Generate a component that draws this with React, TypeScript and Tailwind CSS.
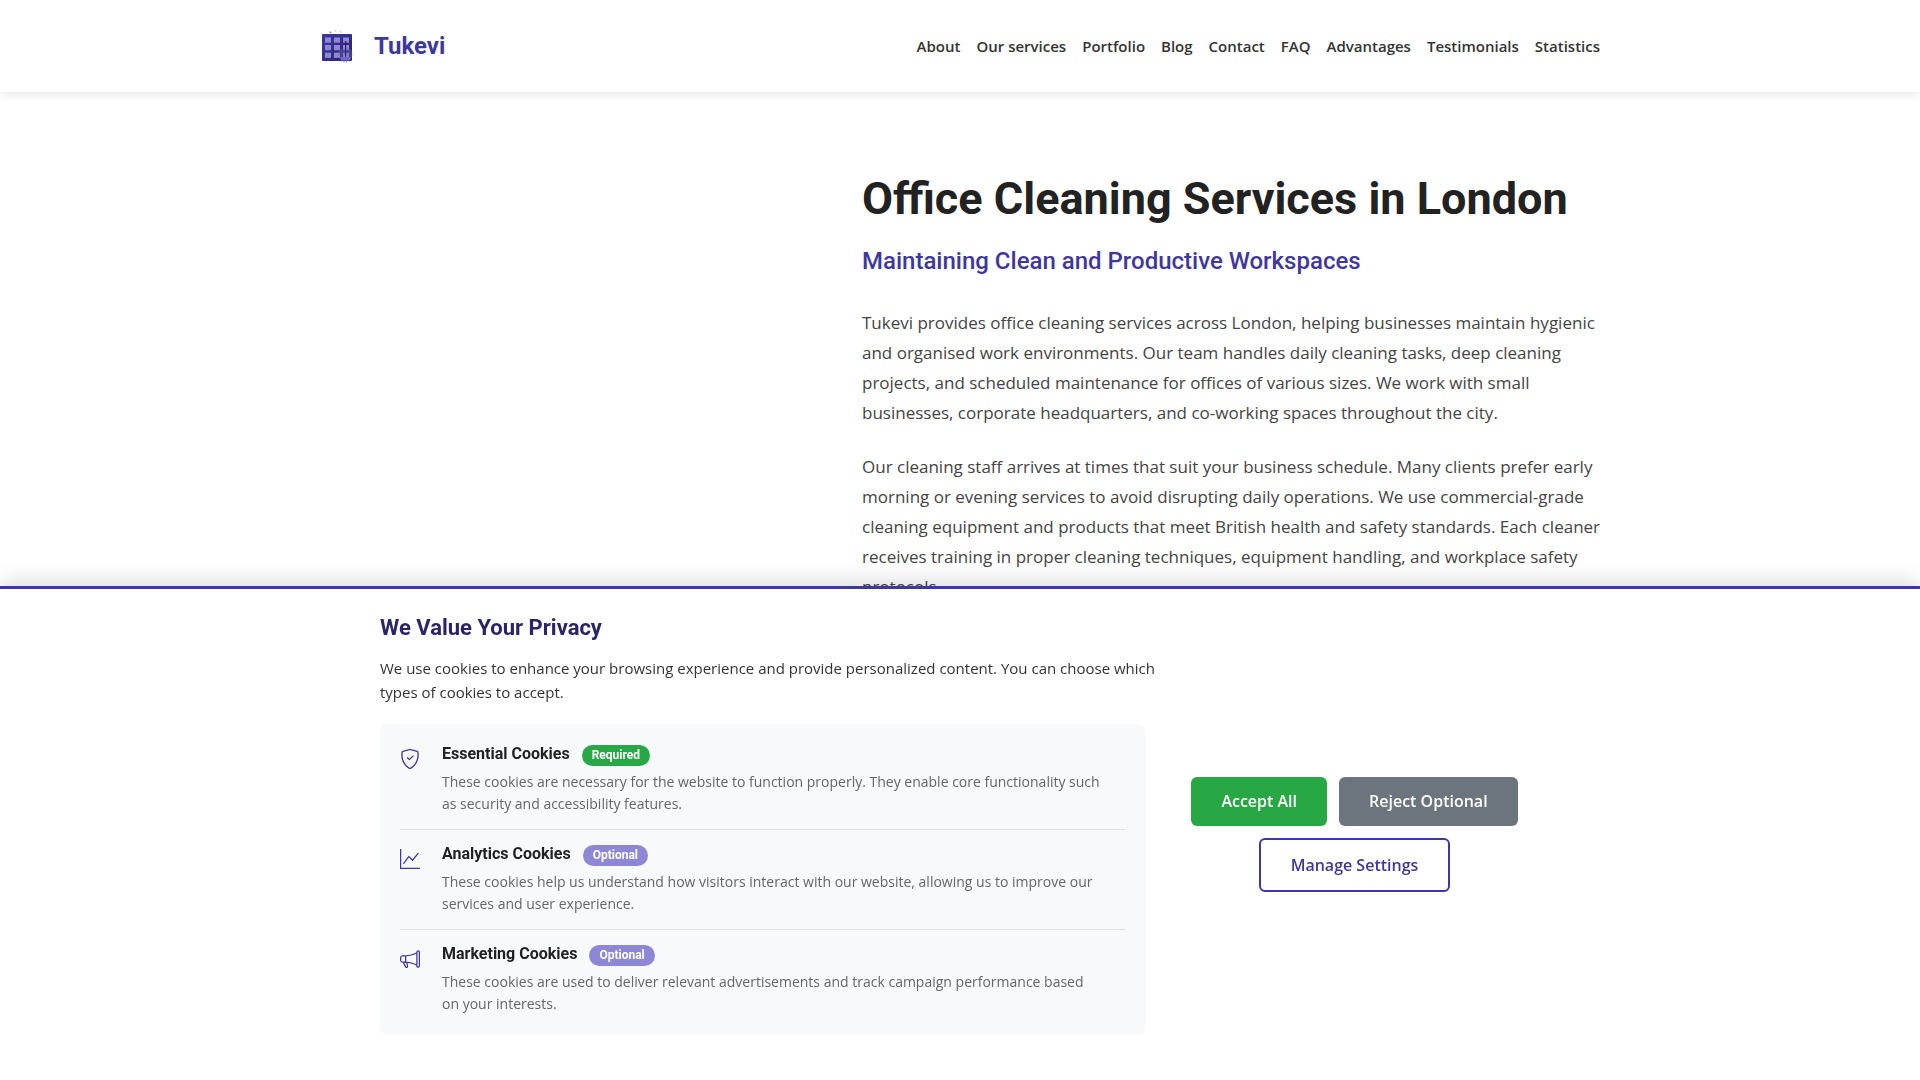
import React from "react";
import { BsShieldCheck, BsGraphUp, BsMegaphone } from "react-icons/bs";

const links = ["About", "Our services", "Portfolio", "Blog", "Contact", "FAQ", "Advantages", "Testimonials", "Statistics"];

const cookies = [
  {
    icon: BsShieldCheck,
    name: "Essential Cookies",
    badge: "Required",
    badgeClass: "bg-[#28a745]",
    text: "These cookies are necessary for the website to function properly. They enable core functionality such as security and accessibility features.",
  },
  {
    icon: BsGraphUp,
    name: "Analytics Cookies",
    badge: "Optional",
    badgeClass: "bg-[#8e87d6]",
    text: "These cookies help us understand how visitors interact with our website, allowing us to improve our services and user experience.",
  },
  {
    icon: BsMegaphone,
    name: "Marketing Cookies",
    badge: "Optional",
    badgeClass: "bg-[#8e87d6]",
    text: "These cookies are used to deliver relevant advertisements and track campaign performance based on your interests.",
  },
];

function Logo() {
  return (
    <svg viewBox="0 0 40 40" className="size-10" aria-hidden="true">
      <defs>
        <linearGradient id="wall" x1="0" y1="0" x2="1" y2="1">
          <stop offset="0" stopColor="#3f37a0" />
          <stop offset="1" stopColor="#2a2568" />
        </linearGradient>
      </defs>
      <g fill="#8e87d6">
        <circle cx="10.5" cy="6.5" r="1" />
        <circle cx="15.5" cy="5" r="0.7" opacity="0.6" />
        <circle cx="20.5" cy="5.7" r="0.7" opacity="0.7" />
        <circle cx="9.3" cy="5.7" r="0.5" opacity="0.5" />
      </g>
      <rect x="2" y="8" width="30" height="27" rx="1" fill="url(#wall)" />
      <g fill="#8e87d6">
        {[11.5, 19, 26.7].map((y) =>
          [5, 14, 23].map((x) => <rect key={`${x}-${y}`} x={x} y={y} width="6" height="5.2" />)
        )}
      </g>
      <circle cx="25.5" cy="28.5" r="7" fill="#6f67c4" opacity="0.4" />
      <rect x="25" y="15" width="1.2" height="15.5" fill="#2a2568" />
      <path d="M20 31h11l-1 3h-9z" fill="#6f67c4" />
      <path d="M21.5 34.5v1M24 34.5v2M26.5 34.5v2M29 34.5v1" stroke="#8e87d6" strokeWidth="1" />
    </svg>
  );
}

export default function App() {
  return (
    <div className="h-screen overflow-hidden bg-white font-['Open_Sans',sans-serif] text-[#333333]">
      <header className="relative bg-white shadow-[0_2px_10px_rgba(0,0,0,0.1)]">
        <div className="mx-auto flex h-23 max-w-[1280px] items-center justify-between">
          <a href="#" className="flex items-center gap-3.5 font-['Roboto',sans-serif] text-2xl font-bold text-[#3f37a0]">
            <Logo />
            Tukevi
          </a>
          <nav className="flex gap-4 text-[15px] font-semibold">
            {links.map((l) => (
              <a key={l} href="#">{l}</a>
            ))}
          </nav>
        </div>
      </header>

      <main className="mx-auto grid max-w-[1288px] grid-cols-[1fr_742px] pt-20">
        <section className="col-start-2">
          <h1 className="font-['Roboto',sans-serif] text-[45px] leading-[54px] font-bold text-[#222222]">
            Office Cleaning Services in London
          </h1>
          <h2 className="mt-4 font-['Roboto',sans-serif] text-2xl leading-[38px] font-medium text-[#3f37a0]">
            Maintaining Clean and Productive Workspaces
          </h2>
          <div className="mt-7 flex flex-col gap-6 text-[17px] leading-[30px] text-[#444444]">
            <p>
              Tukevi provides office cleaning services across London, helping businesses maintain hygienic and organised
              work environments. Our team handles daily cleaning tasks, deep cleaning projects, and scheduled maintenance
              for offices of various sizes. We work with small businesses, corporate headquarters, and co-working spaces
              throughout the city.
            </p>
            <p>
              Our cleaning staff arrives at times that suit your business schedule. Many clients prefer early morning or
              evening services to avoid disrupting daily operations. We use commercial-grade cleaning equipment and
              products that meet British health and safety standards. Each cleaner receives training in proper cleaning
              techniques, equipment handling, and workplace safety protocols.
            </p>
          </div>
        </section>
      </main>

      <aside
        aria-label="Cookie preferences"
        className="fixed inset-x-0 bottom-0 border-t-3 border-[#3f37a0] bg-white py-5 shadow-[0_-4px_20px_rgba(0,0,0,0.15)]"
      >
        <div className="mx-auto grid max-w-[1200px] grid-cols-[765fr_371fr] items-center gap-6 px-5">
          <div>
            <h3 className="font-['Roboto',sans-serif] text-[22px] leading-[38px] font-bold text-[#2a2568]">
              We Value Your Privacy
            </h3>
            <p className="-mr-4 mt-[9px] text-[15px] leading-6">
              We use cookies to enhance your browsing experience and provide personalized content. You can choose which
              types of cookies to accept.
            </p>
            <ul className="mt-5 mb-[25px] divide-y divide-[#dee2e6] rounded-lg bg-[#f8f9fb] px-5 py-1.5">
              {cookies.map(({ icon: Icon, name, badge, badgeClass, text }) => (
                <li key={name} className="flex items-start gap-[22px] pt-3 pb-3.5">
                  <Icon className="mt-[7px] size-5 shrink-0 text-[#3f37a0]" />
                  <div>
                    <div className="flex h-6 items-baseline gap-3 font-['Roboto',sans-serif]">
                      <h4 className="text-base leading-6 font-bold text-[#222222]">{name}</h4>
                      <span className={`${badgeClass} rounded-xl px-2.5 text-xs leading-[21px] font-bold text-white`}>
                        {badge}
                      </span>
                    </div>
                    <p className="mt-[5px] max-w-[660px] text-sm leading-[22px] text-[#666666]">{text}</p>
                  </div>
                </li>
              ))}
            </ul>
          </div>
          <div className="flex flex-wrap justify-center gap-3 text-base font-semibold">
            <button className="rounded-md bg-[#28a745] px-[30px] py-3 leading-[25px] text-white">Accept All</button>
            <button className="rounded-md bg-[#6c757d] px-[30px] py-3 leading-[25px] text-white">Reject Optional</button>
            <button className="rounded-md border-2 border-[#3f37a0] bg-white px-[30px] py-3 leading-[26px] text-[#3f37a0]">
              Manage Settings
            </button>
          </div>
        </div>
      </aside>
    </div>
  );
}
